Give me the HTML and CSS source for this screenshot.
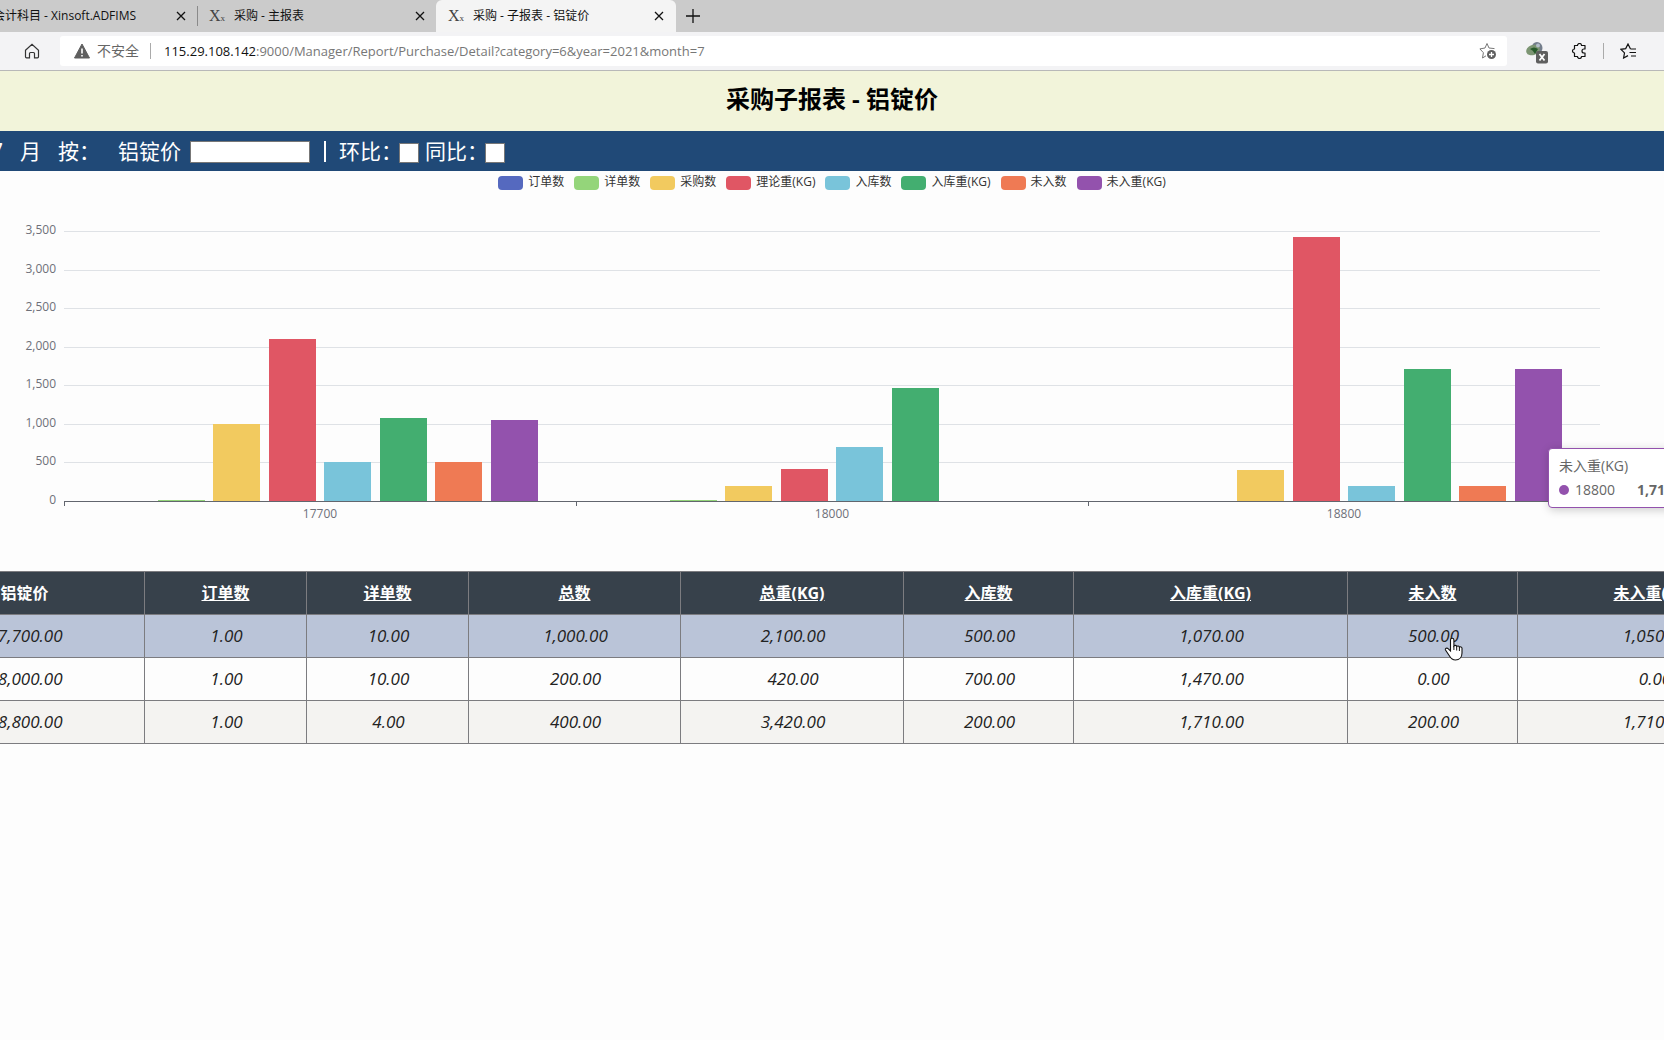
FILE: index.html
```html
<!DOCTYPE html>
<html lang="zh-CN">
<head>
<meta charset="utf-8">
<title>采购 - 子报表 - 铝锭价</title>
<link rel="stylesheet" href="styles.css">
</head>
<body>
<header class="browser">
  <nav class="tabs" aria-label="标签页">
    <div class="tab tab-first"><span class="tab-title">会计科目 - Xinsoft.ADFIMS</span><button class="close" aria-label="关闭"><svg width="10" height="10" viewBox="0 0 10 10"><path d="M1 1l8 8M9 1l-8 8"/></svg></button></div>
    <div class="tab tab-second"><span class="favicon">X<small>x</small></span><span class="tab-title">采购 - 主报表</span><button class="close" aria-label="关闭"><svg width="10" height="10" viewBox="0 0 10 10"><path d="M1 1l8 8M9 1l-8 8"/></svg></button></div>
    <div class="tab tab-active"><span class="favicon">X<small>x</small></span><span class="tab-title">采购 - 子报表 - 铝锭价</span><button class="close" aria-label="关闭"><svg width="10" height="10" viewBox="0 0 10 10"><path d="M1 1l8 8M9 1l-8 8"/></svg></button></div>
    <button class="new-tab" aria-label="新建标签页"><svg width="14" height="14" viewBox="0 0 14 14"><path d="M7 0v14M0 7h14"/></svg></button>
  </nav>
  <div class="toolbar">
    <button class="icon home" aria-label="主页"><svg width="16" height="16" viewBox="0 0 16 16"><path d="M1.500 7.200 8 1.200l6.500 6v6.600a1 1 0 0 1-1 1H10.500V10.500a1 1 0 0 0-1-1h-3a1 1 0 0 0-1 1v4.300H2.500a1 1 0 0 1-1-1z"/></svg></button>
    <div class="address">
      <svg width="16" height="16" viewBox="0 0 16 16"><path d="M8 1 15.500 15H.5z" fill="#5f5f5f" stroke="#5f5f5f" stroke-linejoin="round"/><path d="M8 5.500v5M8 12v1.600" stroke="#fff" stroke-width="1.600"/></svg>
      <span class="insecure">不安全</span>
      <span class="divider"></span>
      <span class="url"><b>115.29.108.142</b>:9000/Manager/Report/Purchase/Detail?category=6&amp;year=2021&amp;month=7</span>
      <button class="icon" aria-label="添加到收藏夹"><svg width="18" height="18" viewBox="0 0 18 18"><path d="M8 1.500 10 6l5.500.6M7 13.800 3.500 16l.9-5.300L.9 6.900 6 6l2-4.500" fill="none" stroke="#777"/><circle cx="12.500" cy="12.500" r="4.500" fill="#5f5f5f"/><path d="M12.500 10v5M10 12.500h5" stroke="#fff" stroke-width="1.300"/></svg></button>
    </div>
    <button class="icon ext" aria-label="扩展"><svg width="24" height="24" viewBox="0 0 24 24"><ellipse cx="12" cy="7" rx="5.500" ry="6" fill="#737d8b"/><ellipse cx="8" cy="9" rx="7" ry="5" fill="#7c9573" transform="rotate(-20 8 9)"/><path d="M5 8q4-3 8 0l-3 5q-2-4-5-5z" fill="#285b2c"/><circle cx="13" cy="4.500" r="2" fill="#b3bdc9"/><rect x="11" y="10" width="12" height="12.500" rx="2" fill="#5f5f5f"/><path d="m14.500 13 5 6.500M19.500 13l-5 6.500" stroke="#fff" stroke-width="1.800"/></svg></button>
    <button class="icon puzzle" aria-label="扩展程序"><svg width="16" height="16" viewBox="0 0 16 16"><path d="M3.500 2.500H6.500a2 2 0 0 1 4 0h3.500V6h-1a2 2 0 0 0 0 4h1v3.500H10.500a2 2 0 0 1-4 0H3.500V10a2 2 0 0 1 0-4z" stroke-linejoin="round"/></svg></button>
    <span class="divider"></span>
    <button class="icon favorites" aria-label="收藏夹"><svg width="17" height="16" viewBox="0 0 17 16"><path d="M10.500 6 8 1 5.700 5.600 1 6.300l3.500 3.600L3.600 15 8 12.600M10.500 6H16M9.500 9.500H16M11 13h5"/></svg></button>
  </div>
</header>
<main class="page">
  <h1>采购子报表 - 铝锭价</h1>
  <form class="filters">
    <span class="period">7</span><span class="month">月</span>
    <span class="by">按：</span>
    <label for="price">铝锭价</label><input id="price" class="price" type="text">
    <span class="bar-sep"></span>
    <label for="mom">环比：</label><input id="mom" type="checkbox">
    <label class="yoy" for="yoy">同比：</label><input id="yoy" type="checkbox">
  </form>
  <section class="chart">
    <ul class="legend">
      <li><i class="order"></i>订单数</li><li><i class="detail"></i>详单数</li><li><i class="purchase"></i>采购数</li><li><i class="theory"></i>理论重(KG)</li><li><i class="stock"></i>入库数</li><li><i class="stock-kg"></i>入库重(KG)</li><li><i class="open"></i>未入数</li><li><i class="open-kg"></i>未入重(KG)</li>
    </ul>
    <div class="y-axis"><span>3,500</span><span>3,000</span><span>2,500</span><span>2,000</span><span>1,500</span><span>1,000</span><span>500</span><span>0</span></div>
    <div class="gridlines"><i></i><i></i><i></i><i></i><i></i><i></i><i></i></div>
    <div class="plot">
      <div class="group"><i class="order" style="height:0.03%"></i><i class="detail" style="height:0.29%"></i><i class="purchase" style="height:28.57%"></i><i class="theory" style="height:60%"></i><i class="stock" style="height:14.29%"></i><i class="stock-kg" style="height:30.57%"></i><i class="open" style="height:14.29%"></i><i class="open-kg" style="height:30%"></i></div>
      <div class="group"><i class="order" style="height:0.03%"></i><i class="detail" style="height:0.29%"></i><i class="purchase" style="height:5.71%"></i><i class="theory" style="height:12%"></i><i class="stock" style="height:20%"></i><i class="stock-kg" style="height:42%"></i><i class="open" style="height:0%"></i><i class="open-kg" style="height:0%"></i></div>
      <div class="group"><i class="order" style="height:0.03%"></i><i class="detail" style="height:0.11%"></i><i class="purchase" style="height:11.43%"></i><i class="theory" style="height:97.71%"></i><i class="stock" style="height:5.71%"></i><i class="stock-kg" style="height:48.86%"></i><i class="open" style="height:5.71%"></i><i class="open-kg" style="height:48.86%"></i></div>
    </div>
    <div class="x-axis"><span>17700</span><span>18000</span><span>18800</span></div>
    <div class="tooltip"><div>未入重(KG)</div><div class="tip-row"><i></i><span>18800</span><b>1,710</b></div></div>
  </section>
  <table>
    <colgroup><col class="c-price"><col class="c-count"><col class="c-count"><col class="c-total"><col class="c-weight"><col class="c-stock"><col class="c-kg"><col class="c-stock"><col></colgroup>
    <thead><tr><th>铝锭价</th><th><a href="#">订单数</a></th><th><a href="#">详单数</a></th><th><a href="#">总数</a></th><th><a href="#">总重(KG)</a></th><th><a href="#">入库数</a></th><th><a href="#">入库重(KG)</a></th><th><a href="#">未入数</a></th><th><a href="#">未入重(KG)</a></th></tr></thead>
    <tbody>
      <tr class="hovered"><td>17,700.00</td><td>1.00</td><td>10.00</td><td>1,000.00</td><td>2,100.00</td><td>500.00</td><td>1,070.00</td><td class="pointed">500.00<svg class="cursor" width="19" height="24" viewBox="0 0 19 24"><path d="M6.500 14V3a1.700 1.700 0 0 1 3.400 0v6a1.600 1.600 0 0 1 2.800.5 1.600 1.600 0 0 1 2.700.8 1.500 1.500 0 0 1 2.600 1V16c0 4-2.500 7-6.500 7-3 0-4.500-1.300-6-4l-4-6c-.8-1.600 1.500-2.500 2.600-1.300z" fill="#fff" stroke="#111" stroke-width="1.100"/><path d="M9.900 9v4M12.700 10v3.500M15.400 10.500V14" stroke="#111"/></svg></td><td>1,050.00</td></tr>
      <tr><td>18,000.00</td><td>1.00</td><td>10.00</td><td>200.00</td><td>420.00</td><td>700.00</td><td>1,470.00</td><td>0.00</td><td>0.00</td></tr>
      <tr><td>18,800.00</td><td>1.00</td><td>4.00</td><td>400.00</td><td>3,420.00</td><td>200.00</td><td>1,710.00</td><td>200.00</td><td>1,710.00</td></tr>
    </tbody>
  </table>
</main>
</body>
</html>
```
FILE: styles.css
```css
* { box-sizing: border-box; }
body {
  margin: 0;
  background: #fdfdfd;
  color: #222;
  font-family: "Open Sans", "Noto Sans CJK SC", sans-serif;
  font-size: 12px;
}
button { padding: 0; border: 0; background: none; display: flex; align-items: center; justify-content: center; }
svg { display: block; flex: none; }
i { display: block; }

/* Browser frame */
.tabs { display: flex; height: 32px; background: #cbcbcb; color: #111; }
.tab { display: flex; align-items: center; white-space: nowrap; line-height: 18px; }
.tab-first { width: 198px; border-right: 1px solid #8a8a8a; margin: 6px 0; padding-right: 11px; }
.tab-first .tab-title { margin-left: -7px; }
.tab-second { width: 238px; padding: 0 11px; }
.tab-active { width: 240px; padding: 0 12px; background: #f4f4f4; border-radius: 6px 6px 0 0; }
.tab .close { margin-left: auto; }
.close svg, .new-tab svg { fill: none; stroke: #111; stroke-width: 1.3; }
.close { width: 10px; height: 20px; }
.new-tab { width: 34px; height: 32px; }
.favicon { width: 25px; font: 16px "Liberation Serif", serif; color: #444; }
.favicon small { font-size: 9px; }
.toolbar { display: flex; align-items: center; height: 39px; background: #f3f3f5; border-bottom: 1px solid #b8b8b8; }
.toolbar .icon { flex: none; }
.home { width: 60px; padding-left: 4px; }
.home svg, .puzzle svg, .favorites svg { fill: none; stroke: #111; stroke-width: 1.2; }
.home svg { stroke: #333; }
.address { flex: 1; display: flex; align-items: center; height: 30px; padding: 0 10px 0 14px; background: #fff; border-radius: 3px; }
.insecure { margin: 0 11px 0 7px; font-size: 14px; line-height: 20px; color: #666; }
.divider { width: 1px; height: 16px; background: #aaa; }
.url { flex: 1; margin-left: 13px; font-size: 13px; line-height: 20px; color: #777; }
.url b { font-weight: 400; color: #111; }
.ext { margin-left: 18px; padding-top: 4px; }
.puzzle { margin: 0 16px 0 22px; }
.favorites { margin: 0 27px 0 16px; }

/* Report heading and filters */
.page { overflow: hidden; }
h1 { margin: 0; height: 60px; padding-top: 10px; background: #f2f4da; color: #000; font-size: 24px; line-height: 36px; text-align: center; }
.filters { display: flex; align-items: center; height: 40px; background: #204977; color: #fff; font-size: 21px; line-height: 32px; white-space: nowrap; }
.period { margin-left: -9px; width: 29px; }
.month { width: 38px; }
.by { width: 60px; }
.filters .price { width: 120px; height: 22px; margin: 2px 0 0 9px; padding: 2px; border: 1px solid #777; background: #fff; }
.bar-sep { width: 2px; height: 21px; margin: 0 13px 0 14px; background: #fff; }
.filters input[type="checkbox"] { appearance: none; width: 20px; height: 20px; margin: 4px 0 0 -3px; background: #fff; border: 1px solid #777; }
.yoy { margin-left: 6px; }

/* Chart */
.chart { position: relative; overflow: hidden; display: grid; grid-template-columns: 56px 8px 1fr 64px; grid-template-rows: 60px 270px 70px; }
.legend { grid-area: 1 / 1 / 2 / 5; display: flex; justify-content: center; gap: 10px; margin: 2px 0 0; padding: 0; list-style: none; color: #333; line-height: 18px; }
.legend li { display: flex; gap: 5px; }
.legend i { width: 25px; height: 14px; margin-top: 3px; border-radius: 4px; }
.order { background: #5569bf; }
.detail { background: #94d57a; }
.purchase { background: #f2ca5f; }
.theory { background: #e05664; }
.stock { background: #79c4da; }
.stock-kg { background: #43ae70; }
.open { background: #ef7a54; }
.open-kg { background: #9352ad; }
.y-axis { grid-area: 2 / 1; display: flex; flex-direction: column; justify-content: space-between; margin: -10px 0 -8px; text-align: right; line-height: 18px; color: #6e7079; }
.gridlines { grid-area: 2 / 3; display: flex; flex-direction: column; }
.gridlines i { flex: 1; border-top: 1px solid #dfe2e6; }
.plot { grid-area: 2 / 3; display: flex; }
.group { flex: 1; display: flex; align-items: flex-end; gap: 2%; padding: 0 2.5%; }
.group i { flex: 1; }
.x-axis { grid-area: 3 / 3; display: flex; align-items: flex-start; border-top: 1px solid #62666e; color: #6e7079; }
.x-axis span { flex: 1; padding-top: 3px; line-height: 18px; text-align: center; background: linear-gradient(#62666e, #62666e) 0 0 / 1px 4px no-repeat; }
.tooltip { position: absolute; right: -42px; top: 277px; width: 158px; padding: 5px 10px; background: #fff; border: 1px solid #9352ad; border-radius: 4px; box-shadow: 1px 2px 10px rgba(0, 0, 0, .2); color: #666; font-size: 14px; line-height: 24px; }
.tip-row { display: flex; align-items: center; }
.tip-row i { width: 10px; height: 10px; margin-right: 6px; border-radius: 50%; background: #9352ad; }
.tip-row b { margin-left: 22px; }

/* Data table */
table { table-layout: fixed; width: calc(100% + 223px); margin-left: -96px; border-collapse: collapse; font-size: 16px; line-height: 24px; text-align: center; }
.c-price { width: 240px; }
.c-count { width: 162px; }
.c-total { width: 212px; }
.c-weight { width: 223px; }
.c-stock { width: 170px; }
.c-kg { width: 274px; }
th, td { height: 43px; padding: 0; border: 1px solid #7c7c80; }
th { background: #37414b; color: #fff; }
th a { color: inherit; }
td { padding-left: 2px; font-size: 17px; font-style: italic; }
.hovered { background: #bac4d8; }
tbody tr:nth-child(3) { background: #f4f3f1; }
.pointed { position: relative; }
.cursor { position: absolute; left: 96px; top: 22px; }
```
